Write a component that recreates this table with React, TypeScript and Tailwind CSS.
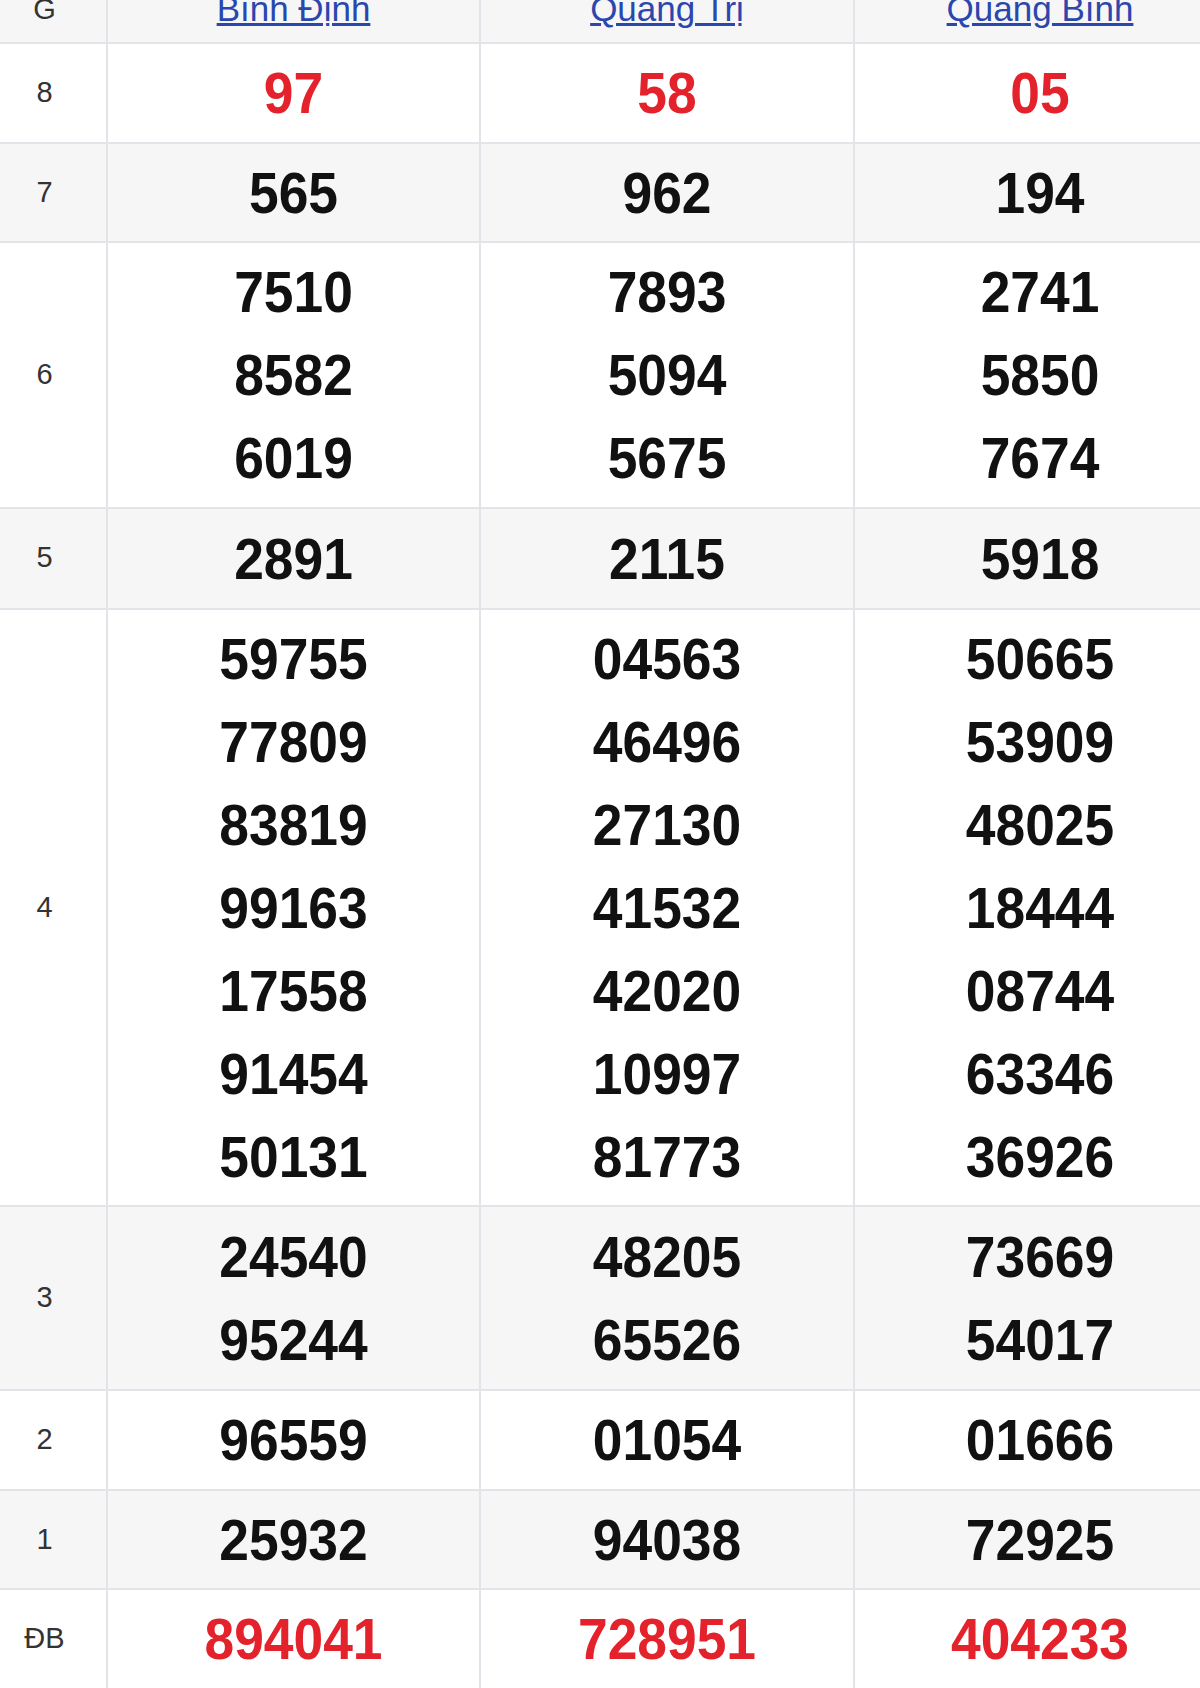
const PROVINCES = ["Bình Định", "Quảng Trị", "Quảng Bình"];

type Prize = {
    label: string;
    values: string[][];
    red?: boolean;
    tall?: boolean;
};

const PRIZES: Prize[] = [
    { label: "8", values: [["97"], ["58"], ["05"]], red: true },
    { label: "7", values: [["565"], ["962"], ["194"]] },
    {
        label: "6",
        values: [
            ["7510", "8582", "6019"],
            ["7893", "5094", "5675"],
            ["2741", "5850", "7674"],
        ],
    },
    { label: "5", values: [["2891"], ["2115"], ["5918"]], tall: true },
    {
        label: "4",
        values: [
            ["59755", "77809", "83819", "99163", "17558", "91454", "50131"],
            ["04563", "46496", "27130", "41532", "42020", "10997", "81773"],
            ["50665", "53909", "48025", "18444", "08744", "63346", "36926"],
        ],
    },
    {
        label: "3",
        values: [
            ["24540", "95244"],
            ["48205", "65526"],
            ["73669", "54017"],
        ],
        tall: true,
    },
    { label: "2", values: [["96559"], ["01054"], ["01666"]] },
    { label: "1", values: [["25932"], ["94038"], ["72925"]] },
    { label: "ĐB", values: [["894041"], ["728951"], ["404233"]], red: true },
];

const COLS = "grid grid-cols-[106px_373px_374px_372px]";

export default function App() {
    return (
        <main className="w-[1200px] overflow-hidden bg-white font-['Liberation_Sans',Arial,sans-serif]">
            <div className="w-[1225px]">
                <div className={`${COLS} grid-rows-[42px] border-b-2 border-[#e2e4e9] bg-[#f6f6f6]`}>
                    <div className="flex h-[42px] items-end justify-center pb-[18px] pr-[17px] text-[29px] leading-none text-[#333]">
                        G
                    </div>
                    {PROVINCES.map((name) => (
                        <div
                            key={name}
                            className="flex h-[42px] items-end justify-center border-l-2 border-[#e2e4e9] pb-[16px]"
                        >
                            <a
                                href="#"
                                className="text-[35px] leading-none text-[#2a47ad] underline decoration-[3px] underline-offset-[2px]"
                            >
                                {name}
                            </a>
                        </div>
                    ))}
                </div>

                {PRIZES.map((prize, index) => (
                    <div
                        key={prize.label}
                        className={`${COLS} border-b-2 border-[#e2e4e9] ${index % 2 === 1 ? "bg-[#f6f6f6]" : "bg-white"}`}
                    >
                        <div className="flex items-center justify-center pr-[17px] text-[29px] text-[#333]">
                            {prize.label}
                        </div>
                        {prize.values.map((column, ci) => (
                            <div
                                key={ci}
                                className={`border-l-2 border-[#e2e4e9] text-center ${prize.tall ? "py-[8px]" : "py-[7.25px]"}`}
                            >
                                {column.map((num) => (
                                    <div
                                        key={num}
                                        className={`scale-x-[0.92] text-[58px] font-bold leading-[83px] ${prize.red ? "text-[#e4222b]" : "text-[#111]"}`}
                                    >
                                        {num}
                                    </div>
                                ))}
                            </div>
                        ))}
                    </div>
                ))}
            </div>
        </main>
    );
}
